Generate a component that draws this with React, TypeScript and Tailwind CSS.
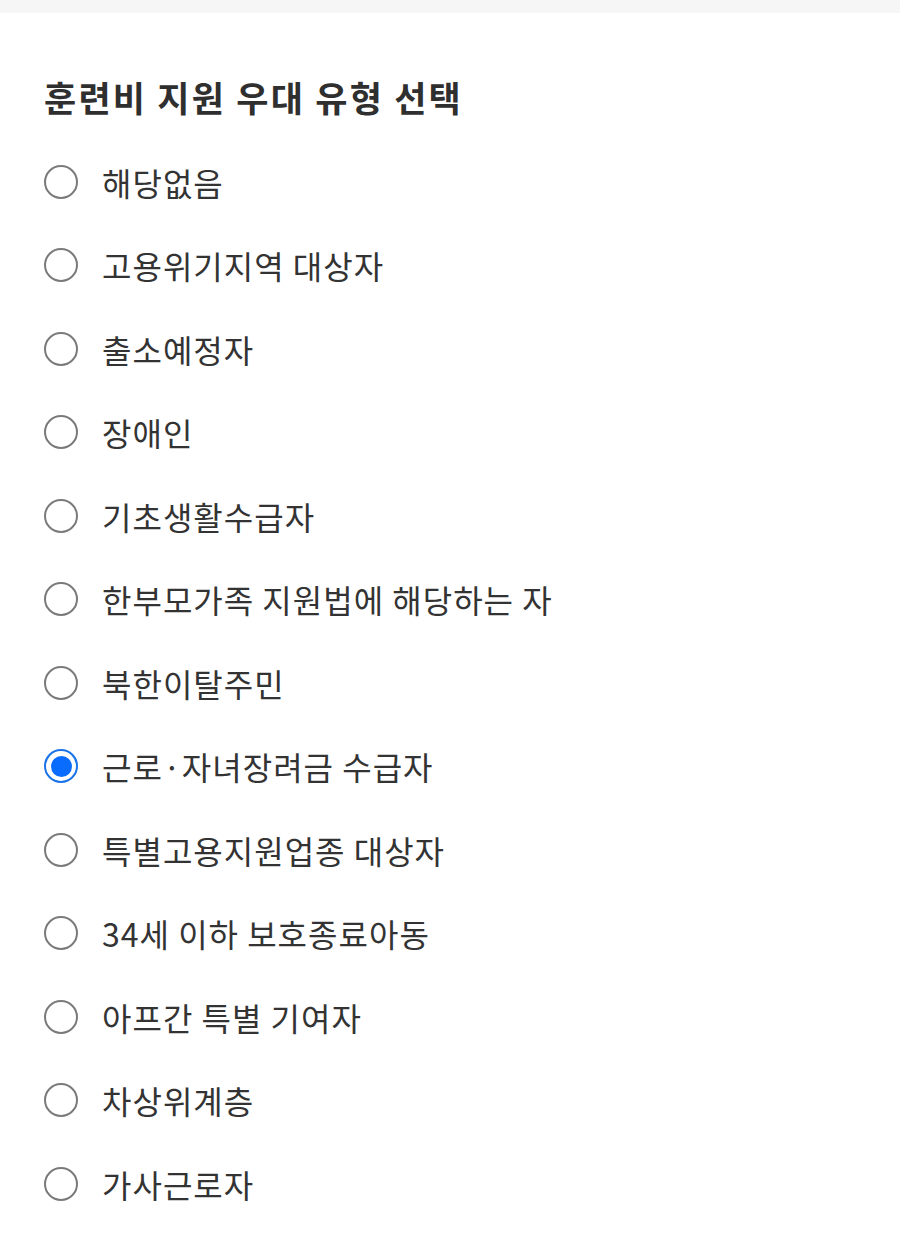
import { useState } from "react";

const OPTIONS = [
  "해당없음",
  "고용위기지역 대상자",
  "출소예정자",
  "장애인",
  "기초생활수급자",
  "한부모가족 지원법에 해당하는 자",
  "북한이탈주민",
  "근로·자녀장려금 수급자",
  "특별고용지원업종 대상자",
  "34세 이하 보호종료아동",
  "아프간 특별 기여자",
  "차상위계층",
  "가사근로자",
];

function Radio({ checked }: { checked: boolean }) {
  if (checked) {
    return (
      <span className="flex h-[34px] w-[34px] shrink-0 items-center justify-center rounded-full border-2 border-[#1a73e8]">
        <span className="h-[21px] w-[21px] rounded-full bg-[#0a6cff]" />
      </span>
    );
  }
  return <span className="h-[34px] w-[34px] shrink-0 rounded-full border-2 border-[#7a7a7a]" />;
}

export default function App() {
  const [selected, setSelected] = useState(7);

  return (
    <div
      className="min-h-[1249px] bg-white text-[#333]"
      style={{ fontFamily: '"Noto Sans CJK KR", "Noto Sans", sans-serif' }}
    >
      <div className="h-[13px] bg-[#f6f6f6]" />
      <div className="px-[44px]">
        <h1 className="mt-[60px] text-[35px] font-bold leading-[48px] tracking-[2.2px] text-[#2f2f2f]">
          훈련비 지원 우대 유형 선택
        </h1>
        <ul className="mt-[19px]">
          {OPTIONS.map((label, i) => (
            <li
              key={label}
              className="flex h-[83.5px] cursor-pointer items-center gap-[24px]"
              onClick={() => setSelected(i)}
            >
              <Radio checked={selected === i} />
              <span className="text-[32px] leading-[40px] tracking-[1px] text-[#333]">{label}</span>
            </li>
          ))}
        </ul>
      </div>
    </div>
  );
}
